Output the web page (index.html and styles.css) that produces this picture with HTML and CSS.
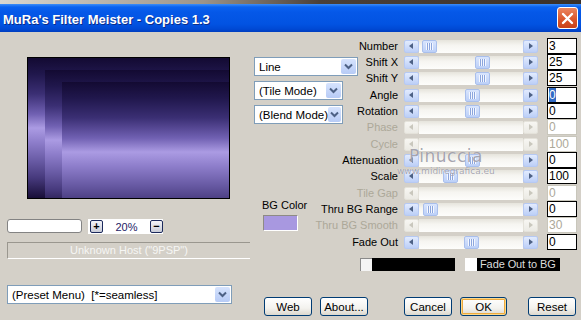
FILE: index.html
```html
<!DOCTYPE html>
<html lang="en">
<head>
    <meta charset="UTF-8">
    <title>MuRa's Filter Meister - Copies 1.3</title>
    <link rel="stylesheet" href="styles.css">
</head>
<body>
    <div class="window">
        <div class="desk"></div>
        <div class="titleBar">
            <span class="title">MuRa's Filter Meister - Copies 1.3</span>
            <span class="closeBtn">
                <svg width="13" height="13" viewBox="0 0 13 13"><path d="M2 2 L11 11 M11 2 L2 11" stroke="#fff" stroke-width="2.4" stroke-linecap="round"/></svg>
            </span>
        </div>

        <div class="client">
            <div class="leftCol">
                <div class="preview">
                    <div class="copy"><div class="copy"><div class="copy"></div></div></div>
                </div>
                <div class="zoomRow">
                    <div class="blankBox"></div>
                    <div class="zoomBox">
                        <span class="zoomBtn">+</span>
                        <span class="zoomVal">20%</span>
                        <span class="zoomBtn">&minus;</span>
                    </div>
                </div>
                <div class="hostBar">Unknown Host ("9PSP")</div>
                <div class="combo preset">
                    <span class="comboText">(Preset Menu)&nbsp; [*=seamless]</span>
                    <span class="comboArrow"><svg width="9" height="7" viewBox="0 0 9 7"><path d="M1 1.5 L4.5 5 L8 1.5" fill="none" stroke="#4d6185" stroke-width="2"/></svg></span>
                </div>
            </div>

            <div class="rightCol">
                <div class="params">
                    <div class="stack">
                        <div class="labels">
                            <span class="lbl">Number</span>
                            <span class="lbl">Shift X</span>
                            <span class="lbl">Shift Y</span>
                            <span class="lbl">Angle</span>
                            <span class="lbl">Rotation</span>
                            <span class="lbl off">Phase</span>
                            <span class="lbl off">Cycle</span>
                            <span class="lbl">Attenuation</span>
                            <span class="lbl">Scale</span>
                            <span class="lbl off">Tile Gap</span>
                            <span class="lbl">Thru BG Range</span>
                            <span class="lbl off">Thru BG Smooth</span>
                            <span class="lbl">Fade Out</span>
                        </div>
                        <div class="mid">
                            <div class="combo wide">
                                <span class="comboText">Line</span>
                                <span class="comboArrow"><svg width="9" height="7" viewBox="0 0 9 7"><path d="M1 1.5 L4.5 5 L8 1.5" fill="none" stroke="#4d6185" stroke-width="2"/></svg></span>
                            </div>
                            <div class="combo">
                                <span class="comboText">(Tile Mode)</span>
                                <span class="comboArrow"><svg width="9" height="7" viewBox="0 0 9 7"><path d="M1 1.5 L4.5 5 L8 1.5" fill="none" stroke="#4d6185" stroke-width="2"/></svg></span>
                            </div>
                            <div class="combo">
                                <span class="comboText">(Blend Mode)</span>
                                <span class="comboArrow"><svg width="9" height="7" viewBox="0 0 9 7"><path d="M1 1.5 L4.5 5 L8 1.5" fill="none" stroke="#4d6185" stroke-width="2"/></svg></span>
                            </div>
                            <div class="bgColor">
                                <span>BG Color</span>
                                <span class="swatch"></span>
                            </div>
                        </div>
                    </div>

                    <div class="sliders">
                        <div class="slider"><span class="sBtn left"></span><span class="track"><span class="thumb" style="margin-left:3px"></span></span><span class="sBtn right"></span></div>
                        <div class="slider"><span class="sBtn left"></span><span class="track"><span class="thumb" style="margin-left:56px"></span></span><span class="sBtn right"></span></div>
                        <div class="slider"><span class="sBtn left"></span><span class="track"><span class="thumb" style="margin-left:56px"></span></span><span class="sBtn right"></span></div>
                        <div class="slider"><span class="sBtn left"></span><span class="track"><span class="thumb" style="margin-left:46px"></span></span><span class="sBtn right"></span></div>
                        <div class="slider"><span class="sBtn left"></span><span class="track"><span class="thumb" style="margin-left:46px"></span></span><span class="sBtn right"></span></div>
                        <div class="slider off"><span class="sBtn left"></span><span class="track"></span><span class="sBtn right"></span></div>
                        <div class="slider off"><span class="sBtn left"></span><span class="track"></span><span class="sBtn right"></span></div>
                        <div class="slider"><span class="sBtn left"></span><span class="track"><span class="thumb" style="margin-left:46px"></span></span><span class="sBtn right"></span></div>
                        <div class="slider"><span class="sBtn left"></span><span class="track"><span class="thumb" style="margin-left:24px"></span></span><span class="sBtn right"></span></div>
                        <div class="slider off"><span class="sBtn left"></span><span class="track"></span><span class="sBtn right"></span></div>
                        <div class="slider"><span class="sBtn left"></span><span class="track"><span class="thumb" style="margin-left:4px"></span></span><span class="sBtn right"></span></div>
                        <div class="slider off"><span class="sBtn left"></span><span class="track"></span><span class="sBtn right"></span></div>
                        <div class="slider"><span class="sBtn left"></span><span class="track"><span class="thumb" style="margin-left:45px"></span></span><span class="sBtn right"></span></div>
                    </div>

                    <div class="values">
                        <span class="num">3</span>
                        <span class="num">25</span>
                        <span class="num">25</span>
                        <span class="num"><span class="sel">0</span></span>
                        <span class="num">0</span>
                        <span class="num off">0</span>
                        <span class="num off">100</span>
                        <span class="num">0</span>
                        <span class="num">100</span>
                        <span class="num off">0</span>
                        <span class="num">0</span>
                        <span class="num off">30</span>
                        <span class="num">0</span>
                    </div>

                    <div class="watermark">
                        <span class="wmName">Pinuccia</span>
                        <span class="wmSite">www.midiregrafica.eu</span>
                    </div>
                </div>

                <div class="fadeRow">
                    <div class="fadeBar"><span class="fadeChip"></span></div>
                    <span class="check"></span>
                    <span class="fadeLabel">Fade Out to BG</span>
                </div>

                <div class="buttons">
                    <span class="btn">Web</span>
                    <span class="btn">About...</span>
                    <span class="btn cancel">Cancel</span>
                    <span class="btn ok">OK</span>
                    <span class="btn reset">Reset</span>
                </div>
            </div>
        </div>
    </div>
</body>
</html>
```

FILE: styles.css
```css
body {
    margin: 0;
    background-color: #d4d0c8;
    font-family: "Liberation Sans", Arial, sans-serif;
    font-size: 11px;
    color: #000;
    overflow: hidden;
}

.window {
    width: 581px;
    height: 320px;
    background-color: #d4d0c8;
}

.desk {
    height: 4px;
    background: linear-gradient(to right, #d9d7d0, #9c948a 35%, #4a4038 55%, #3b3129);
}

/* title bar */

.titleBar {
    height: 28px;
    display: flex;
    align-items: center;
    justify-content: space-between;
    padding: 0 3px 0 3px;
    background: linear-gradient(#3d8ef7 0, #0a62f0 3px, #0558e8 8px, #0253e2 20px, #0049d4 25px, #003ec0 28px);
}

.title {
    padding-top: 3px;
    font-weight: bold;
    font-size: 13px;
    color: #fff;
    text-shadow: 1px 1px 0 #0b2d8a;
}

.closeBtn {
    width: 19px;
    height: 20px;
    display: flex;
    align-items: center;
    justify-content: center;
    border: 1px solid #fff;
    border-radius: 3px;
    background: linear-gradient(#ec8660, #d9542a 60%, #c8421a);
}

/* main area */

.client {
    display: flex;
    height: 288px;
}

.leftCol {
    width: 254px;
    padding-left: 7px;
    box-sizing: border-box;
    display: flex;
    flex-direction: column;
    align-items: flex-start;
}

.preview {
    width: 201px;
    height: 140px;
    margin: 25px 0 0 20px;
    border: 1px solid #000;
    display: flex;
}

.copy {
    flex: 1;
    display: flex;
    background: linear-gradient(#130a32 0, #20174c 16px, #3b2f74 36px, #7060b2 56px, #ab9be3 70px, #8e7ecb 84px, #6a5ca6 102px, #46397c 120px, #160c34 141px);
}

.copy .copy {
    margin: 12px 0 0 17px;
}

.zoomRow {
    display: flex;
    margin-top: 20px;
}

.blankBox {
    width: 73px;
    height: 12px;
    border: 1px solid #838383;
    border-radius: 3px;
    background-color: #fff;
}

.zoomBox {
    width: 73px;
    height: 15px;
    margin-left: 6px;
    padding-left: 2px;
    display: flex;
    align-items: center;
    justify-content: space-between;
    background-color: #fff;
}

.zoomBtn {
    width: 11px;
    height: 11px;
    display: flex;
    align-items: center;
    justify-content: center;
    border: 1px solid #1c2a5c;
    border-radius: 2px;
    background: linear-gradient(#f4f4f8, #c9ccd8);
    font-weight: bold;
    font-size: 11px;
    line-height: 11px;
    color: #000;
}

.zoomVal {
    color: #1c1c66;
}

.hostBar {
    width: 242px;
    height: 15px;
    margin-top: 8px;
    border-top: 1px solid #9a978f;
    border-left: 1px solid #9a978f;
    border-bottom: 1px solid #fff;
    text-align: center;
    line-height: 15px;
    color: #f6f6f4;
}

/* combo boxes */

.combo {
    width: 87px;
    height: 17px;
    display: flex;
    align-items: center;
    justify-content: space-between;
    border: 1px solid #7f9db9;
    background-color: #fff;
}

.combo.wide {
    width: 102px;
}

.combo.preset {
    width: 223px;
    margin-top: 26px;
}

.comboText {
    padding-left: 4px;
    font-size: 11.5px;
    white-space: nowrap;
}

.comboArrow {
    width: 15px;
    height: 15px;
    margin-right: 1px;
    display: flex;
    align-items: center;
    justify-content: center;
    border-radius: 2px;
    background: linear-gradient(#d6e3fd, #b7cbf6);
}

/* parameter rows: 16, 16, 17 px repeating */

.params {
    position: relative;
    display: flex;
    margin-top: 6px;
}

.stack {
    display: grid;
    width: 144px;
}

.labels,
.mid {
    grid-area: 1 / 1;
    display: flex;
    flex-direction: column;
}

.labels {
    align-items: flex-end;
}

.lbl {
    height: 16px;
    line-height: 16px;
    white-space: nowrap;
}

.lbl:nth-child(3n) {
    height: 17px;
    line-height: 17px;
}

.lbl.off {
    color: #aca899;
}

.mid {
    align-items: flex-start;
    gap: 5px;
    padding-top: 19px;
}

.bgColor {
    display: flex;
    flex-direction: column;
    gap: 4px;
    margin-top: 70px;
    padding-left: 8px;
}

.swatch {
    width: 33px;
    height: 14px;
    margin-left: 1px;
    border: 1px solid;
    border-color: #8e8b84 #fff #fff #8e8b84;
    background-color: #a898e0;
}

.sliders {
    display: flex;
    flex-direction: column;
    margin-left: 6px;
    width: 136px;
}

.slider {
    height: 16px;
    width: 134px;
    display: flex;
    align-items: center;
}

.slider:nth-child(3n) {
    height: 17px;
}

.track {
    flex: 1;
    height: 13px;
    display: flex;
    background: linear-gradient(#e6e4dc, #f6f5f1 40%, #fdfdfb);
}

.sBtn {
    width: 13px;
    height: 11px;
    position: relative;
    border: 1px solid #b6c9f3;
    border-radius: 2px;
    background: linear-gradient(#e2ebfe, #bccff7);
}

.sBtn::before {
    content: "";
    position: absolute;
    top: 2px;
    border-top: 3.5px solid transparent;
    border-bottom: 3.5px solid transparent;
}

.sBtn.left::before {
    left: 4px;
    border-right: 4px solid #4d6185;
}

.sBtn.right::before {
    left: 5px;
    border-left: 4px solid #4d6185;
}

.slider.off .sBtn {
    border-color: #e4e2da;
    background: linear-gradient(#f7f6f2, #ebeae4);
}

.slider.off .sBtn.left::before {
    border-right-color: #c9c7bd;
}

.slider.off .sBtn.right::before {
    border-left-color: #c9c7bd;
}

.thumb {
    width: 13px;
    height: 11px;
    position: relative;
    border: 1px solid #a9bfec;
    border-radius: 2px;
    background: linear-gradient(#d9e5fd, #bcd0f8);
}

.thumb::before {
    content: "";
    position: absolute;
    left: 3px;
    top: 2px;
    width: 7px;
    height: 7px;
    background: repeating-linear-gradient(to right, #f4f7ff 0 1px, #8ca6dd 1px 2px);
}

.values {
    display: flex;
    flex-direction: column;
    margin-left: 7px;
}

.num {
    width: 30px;
    height: 16px;
    box-sizing: border-box;
    padding-left: 1px;
    border: 1px solid #000;
    background-color: #fff;
    font-size: 12px;
    line-height: 14px;
}

.num:nth-child(3n) {
    margin-bottom: 1px;
}

.num.off {
    border-color: #c8c6bb;
    color: #aca899;
}

.sel {
    background-color: #316ac5;
    color: #fff;
}

.watermark {
    position: absolute;
    left: 143px;
    top: 108px;
    display: flex;
    flex-direction: column;
    align-items: center;
    color: rgba(105, 105, 122, 0.6);
    font-family: "DejaVu Sans", sans-serif;
    text-shadow: 0 0 1px #fff;
}

.wmName {
    font-size: 17px;
    line-height: 20px;
    letter-spacing: 0.5px;
}

.wmSite {
    font-size: 9px;
    line-height: 11px;
}

/* fade and buttons */

.fadeRow {
    display: flex;
    margin: 8px 0 0 106px;
    height: 13px;
}

.fadeBar {
    width: 95px;
    height: 13px;
    background-color: #000;
}

.fadeChip {
    display: block;
    width: 11px;
    height: 12px;
    border-style: solid;
    border-color: #8a8a8a;
    border-width: 1px 0 0 1px;
    background-color: #f4f4f4;
}

.check {
    width: 12px;
    height: 13px;
    margin-left: 10px;
    background-color: #fff;
}

.fadeLabel {
    padding: 0 4px 0 3px;
    background-color: #000;
    color: #dcdcdc;
    line-height: 13px;
    letter-spacing: -0.1px;
}

.buttons {
    display: flex;
    margin: 26px 0 0 10px;
}

.btn {
    width: 46px;
    height: 17px;
    display: flex;
    align-items: center;
    justify-content: center;
    border: 1px solid #003c74;
    border-radius: 3px;
    background: linear-gradient(#fff, #f3f2ee 60%, #dcd8ce);
    font-size: 11.5px;
}

.btn + .btn {
    margin-left: 8px;
}

.btn.cancel {
    margin-left: 36px;
}

.btn.ok {
    width: 45px;
    box-shadow: inset 0 0 0 1px #fbd98d, inset 0 0 0 2px #eeaa3d;
}

.btn.reset {
    margin-left: 21px;
}
```
